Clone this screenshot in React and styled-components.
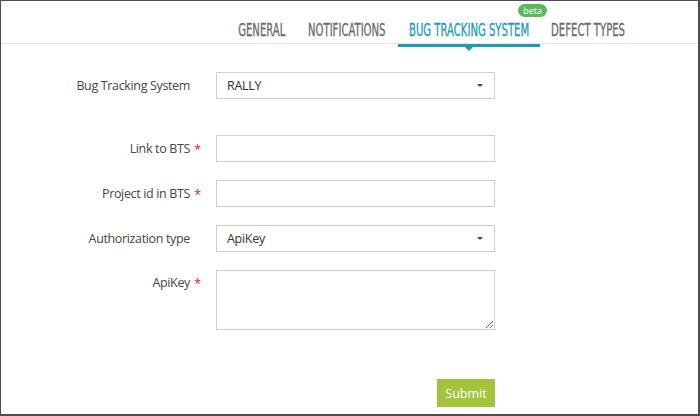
import React from "react";
import styled, { createGlobalStyle } from "styled-components";

const tabs = [
  { name: "GENERAL", width: 68 },
  { name: "NOTIFICATIONS", width: 98 },
  { name: "BUG TRACKING SYSTEM", width: 142, active: true, beta: true },
  { name: "DEFECT TYPES", width: 93 },
];

function Select({ value }) {
  return (
    <SelectBox>
      <span>{value}</span>
      <Caret />
    </SelectBox>
  );
}

function App() {
  return (
    <Frame>
      <GlobalStyle />
      <Header>
        <Tabs>
          {tabs.map((tab) => (
            <Tab key={tab.name} active={tab.active} w={tab.width}>
              <TabText>{tab.name}</TabText>
              {tab.beta && <Beta>beta</Beta>}
              {tab.active && <Pointer />}
            </Tab>
          ))}
        </Tabs>
      </Header>
      <Form onSubmit={(e) => e.preventDefault()}>
        <Row>
          <Label>
            Bug Tracking System
            <Star />
          </Label>
          <Select value="RALLY" />
        </Row>
        <Row spaced>
          <Label>
            Link to BTS
            <Star>*</Star>
          </Label>
          <Input type="text" />
        </Row>
        <Row>
          <Label>
            Project id in BTS
            <Star>*</Star>
          </Label>
          <Input type="text" />
        </Row>
        <Row>
          <Label>
            Authorization type
            <Star />
          </Label>
          <Select value="ApiKey" />
        </Row>
        <Row top>
          <Label top>
            ApiKey
            <Star>*</Star>
          </Label>
          <Area />
        </Row>
        <Actions>
          <SubmitBtn type="submit">Submit</SubmitBtn>
        </Actions>
      </Form>
    </Frame>
  );
}

export default App;

const GlobalStyle = createGlobalStyle`
  body {
    margin: 0;
    background: #fff;
    font-family: "Open Sans", "Liberation Sans", sans-serif;
  }
  * { box-sizing: border-box; }
`;

const Frame = styled.div`
  width: 700px;
  height: 416px;
  border-style: solid;
  border-color: #4d4d4d;
  border-width: 1px 2px 2px 1px;
  background: #fff;
`;

const Header = styled.div`
  height: 43px;
  border-bottom: 1px solid #e6e6e6;
  display: flex;
  padding-left: 227px;
`;

const Tabs = styled.div`
  display: flex;
  gap: 2px;
  align-items: stretch;
`;

const Tab = styled.div`
  position: relative;
  width: ${({ w }) => w}px;
  display: flex;
  align-items: center;
  justify-content: center;
  padding-top: 14px;
  margin-bottom: -4px;
  color: ${({ active }) => (active ? "#1d9cb3" : "#6b6b6b")};
  border-bottom: 3px solid ${({ active }) => (active ? "#1d9cb3" : "transparent")};
`;

const TabText = styled.span`
  display: inline-block;
  white-space: nowrap;
  font-family: "DejaVu Sans Condensed", "DejaVu Sans", sans-serif;
  font-weight: 400;
  font-size: 17px;
  -webkit-text-stroke: 0.3px currentColor;
  transform: scaleX(0.66);
  transform-origin: center;
`;

const Beta = styled.span`
  position: absolute;
  top: 3px;
  right: -7px;
  height: 13px;
  padding: 0 5px;
  border-radius: 7px;
  background: #5cb85c;
  color: #fff;
  font-family: "Open Sans", sans-serif;
  font-size: 9px;
  line-height: 13px;
`;

const Pointer = styled.span`
  position: absolute;
  left: 50%;
  bottom: -7px;
  margin-left: -4px;
  border-left: 4px solid transparent;
  border-right: 4px solid transparent;
  border-top: 4px solid #1d9cb3;
`;

const Form = styled.form`
  padding-top: 28px;
  display: flex;
  flex-direction: column;
  gap: 18px;
  width: 494px;
`;

const Row = styled.div`
  display: flex;
  align-items: ${({ top }) => (top ? "flex-start" : "center")};
  margin-top: ${({ spaced }) => (spaced ? "18px" : "0")};
`;

const Label = styled.label`
  width: 215px;
  flex-shrink: 0;
  display: flex;
  justify-content: flex-end;
  padding-right: 14px;
  padding-top: ${({ top }) => (top ? "4px" : "0")};
  font-size: 12.5px;
  letter-spacing: -0.35px;
  color: #464646;
`;

const Star = styled.span`
  width: 12px;
  padding-left: 4px;
  color: #e8202a;
  font-size: 13px;
`;

const Field = `
  width: 279px;
  height: 27px;
  border: 1px solid #cfcfcf;
  background: #fff;
  font-family: "Open Sans", sans-serif;
  font-size: 12.5px;
  letter-spacing: -0.3px;
  color: #333;
`;

const SelectBox = styled.div`
  ${Field}
  display: flex;
  align-items: center;
  justify-content: space-between;
  padding: 0 11px 0 10px;
`;

const Caret = styled.span`
  border-left: 3px solid transparent;
  border-right: 3px solid transparent;
  border-top: 3px solid #444;
`;

const Input = styled.input`
  ${Field}
  padding: 0 10px;
  outline: none;
`;

const Area = styled.textarea`
  ${Field}
  height: 60px;
  padding: 6px 10px;
  outline: none;
  resize: vertical;
`;

const Actions = styled.div`
  display: flex;
  justify-content: flex-end;
  margin-top: 31px;
`;

const SubmitBtn = styled.button`
  width: 58px;
  height: 28px;
  border: none;
  background: #a3c43a;
  color: #fff;
  font-family: "Open Sans", sans-serif;
  font-size: 12.5px;
  padding: 0;
  cursor: pointer;
`;
